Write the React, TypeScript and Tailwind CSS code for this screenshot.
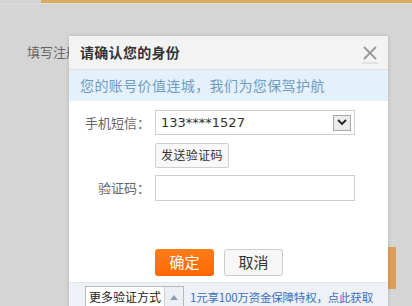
import React from 'react';

const font = { fontFamily: '"Noto Sans CJK SC", "Noto Sans", sans-serif' };

const VerifyDialog: React.FC = () => {
  return (
    <div className="absolute left-[69px] top-[36px] w-[319px] h-[280px] bg-white flex flex-col shadow-[0_0_4px_rgba(0,0,0,0.15)]">
      {/* header */}
      <div className="h-[34px] shrink-0 bg-[#f3f3f3] border-b border-[#e2e2e2] flex items-center justify-between pl-[11px] pr-[10px]">
        <span className="text-[14px] font-bold text-[#333] tracking-[0.3px]">请确认您的身份</span>
        <svg width="16" height="20" viewBox="0 0 16 20" className="mt-[2px]">
          <path d="M2 3 L14 15 M14 3 L2 15" stroke="#9a9a9a" strokeWidth="1.8" />
          <path d="M0 19 H16" stroke="#d0d0d0" strokeWidth="1" />
        </svg>
      </div>
      {/* notice */}
      <div className="h-[31px] shrink-0 bg-[#e4f1fa] flex items-center pl-[11px] text-[14px] tracking-[0.4px] text-[#6f9cc2]">
        您的账号价值连城，我们为您保驾护航
      </div>
      {/* form */}
      <div className="flex-1 pt-[9px]">
        <div className="grid grid-cols-[81px_1fr] gap-x-[5px] items-center pr-[33px]">
          <span className="text-right text-[13px] text-[#666]">手机短信：</span>
          <div className="h-[25px] border border-[#cfcfcf] flex items-center justify-between pl-[5px] pr-[3px]">
            <span className="text-[13px] text-[#333]" style={{ fontFamily: '"DejaVu Sans", sans-serif' }}>133****1527</span>
            <span className="w-[18px] h-[16px] border border-[#a9a9a9] bg-[#ececec] flex items-center justify-center">
              <svg width="10" height="7" viewBox="0 0 10 7">
                <path d="M1 1 L5 5 L9 1" fill="none" stroke="#222" strokeWidth="1.8" />
              </svg>
            </span>
          </div>
          <span />
          <div className="mt-[6px]">
            <button className="h-[25px] px-[5px] border border-[#cfcfcf] rounded-[2px] bg-[#f8f8f8] text-[12px] tracking-[0.4px] text-[#333]">
              发送验证码
            </button>
          </div>
          <span className="text-right text-[13px] text-[#666] mt-[7px]">验证码：</span>
          <div className="h-[26px] border border-[#cfcfcf] mt-[7px]" />
        </div>
        <div className="flex gap-[10px] pl-[86px] mt-[48px]">
          <button className="w-[59px] h-[27px] rounded-[3px] bg-gradient-to-b from-[#ff7d1a] to-[#ff6600] text-white text-[15px]">
            确定
          </button>
          <button className="w-[59px] h-[27px] rounded-[3px] border border-[#cccccc] bg-[#f7f7f7] text-[#333] text-[15px]">
            取消
          </button>
        </div>
      </div>
      {/* footer */}
      <div className="h-[34px] shrink-0 bg-[#eef2f6] border-t border-[#e3e6ea] flex items-start pt-[3px] pl-[16px]">
        <div className="h-[22px] flex border border-[#b9b9b9] bg-white">
          <span className="px-[3px] text-[12px] text-[#222] leading-[20px]">更多验证方式</span>
          <span className="w-[19px] border-l border-[#cfcfcf] bg-[#eceff3] flex items-center justify-center">
            <svg width="8" height="5" viewBox="0 0 8 5">
              <path d="M0 5 L4 0 L8 5 Z" fill="#8aa0b8" />
            </svg>
          </span>
        </div>
        <span className="ml-[6px] text-[11.5px] tracking-[-0.2px] text-[#3b6fc0] leading-[22px]">1元享100万资金保障特权，点此获取</span>
      </div>
    </div>
  );
};

export default function App() {
  return (
    <div className="relative w-[412px] h-[306px] overflow-hidden bg-[#d5d5d5]" style={font}>
      <div className="flex h-[3px]">
        <div className="w-[41px] bg-[#d2d2d2]" />
        <div className="flex-1 bg-[#d9ad5f]" />
      </div>
      <div className="h-[1px] bg-[#e0dcd3]" />
      <div className="ml-[27px] mt-[38px] w-[42px] overflow-hidden whitespace-nowrap text-[13px] text-[#666]">填写注册信息</div>
      <div className="flex justify-end pr-[16px] mt-[185px]">
        <div className="w-[9px] h-[42px] bg-[#e09d57]" />
      </div>
      <VerifyDialog />
    </div>
  );
}
